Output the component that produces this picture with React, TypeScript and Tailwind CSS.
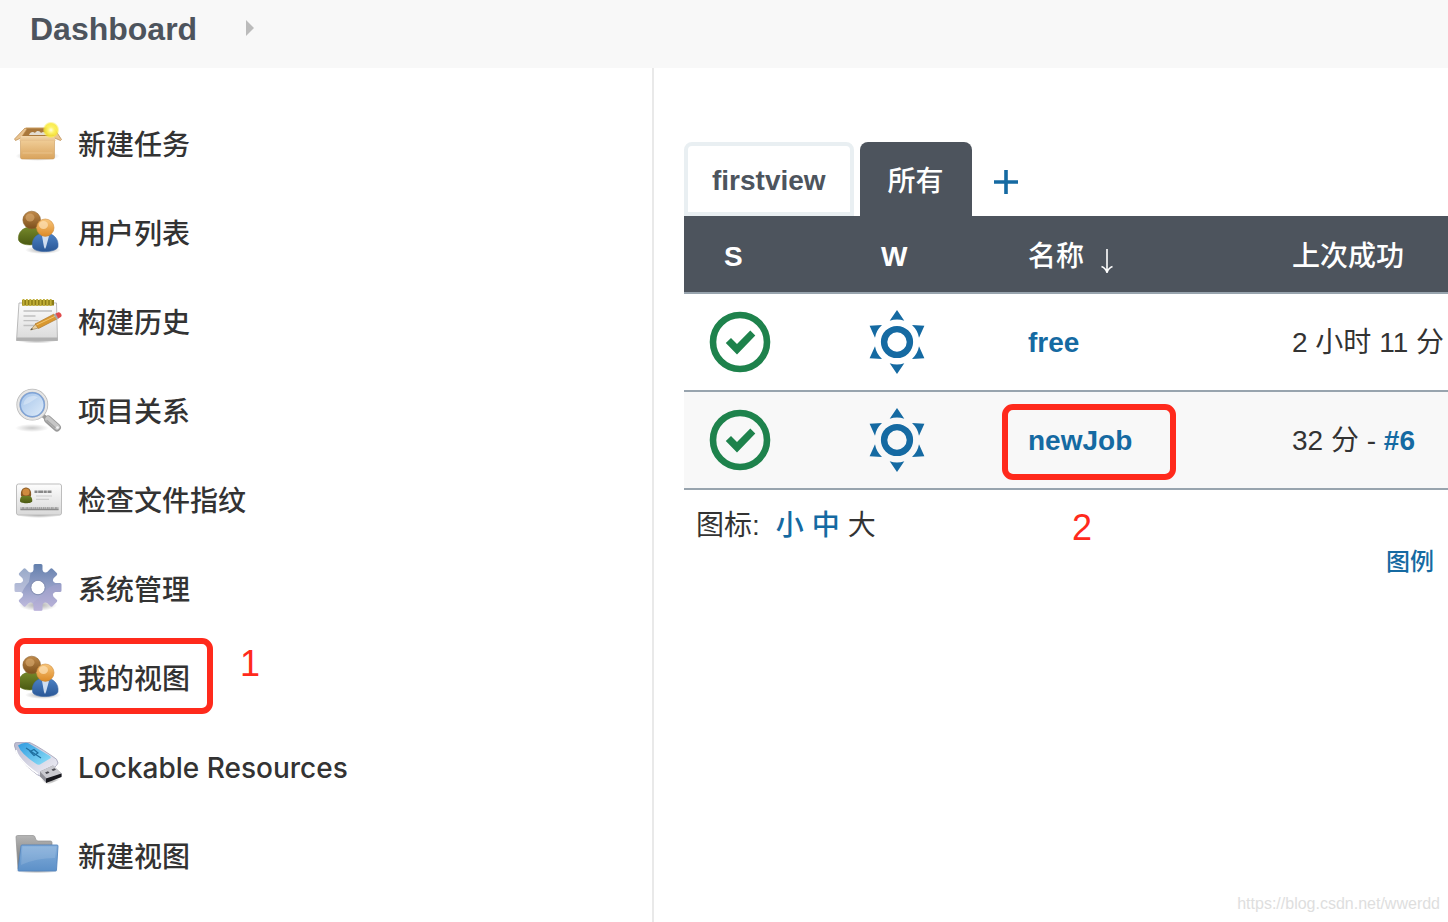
import React from "react";

const ICON = "block size-12 shrink-0";

function SharedGradients() {
  const grads: [string, string, string, string, string][] = [
    ["box-front", "#f0cd97", "#d9a35c", "0", "1"],
    ["box-rim", "#f3d9b0", "#e6bf88", "0", "1"],
    ["head-brown", "#c08a4a", "#7c4f1c", "0", "1"],
    ["body-green", "#75882a", "#4b5a12", "0", "1"],
    ["head-orange", "#f8c67c", "#dc8a26", "0", "1"],
    ["body-blue", "#4d83c6", "#2a5796", "0", "1"],
    ["paper", "#fdfdfd", "#d9d9d9", "0", "1"],
    ["lens", "#9fc0e8", "#e3effb", "1", "1"],
    ["gear", "#6380ad", "#c9c0e2", "0", "1"],
    ["usb-body", "#b9b9cf", "#f1f1f8", "1", "1"],
    ["usb-label", "#2f9be0", "#8fe0f8", "1", "1"],
    ["folder-back", "#b5b5b5", "#6f6f6f", "0", "1"],
    ["folder-front", "#85afdb", "#5c90c8", "0", "1"],
  ];
  return (
    <svg className="absolute size-0" aria-hidden="true">
      <defs>
        {grads.map(([id, from, to, x2, y2]) => (
          <linearGradient key={id} id={id} x1="0" y1="0" x2={x2} y2={y2}>
            <stop offset="0" stopColor={from} />
            <stop offset="1" stopColor={to} />
          </linearGradient>
        ))}
        <radialGradient id="glow">
          <stop offset="0" stopColor="#fffde0" />
          <stop offset="0.35" stopColor="#fdf36a" />
          <stop offset="0.75" stopColor="#f8e832" stopOpacity="0.85" />
          <stop offset="1" stopColor="#f8ec4a" stopOpacity="0" />
        </radialGradient>
        <radialGradient id="shade">
          <stop offset="0" stopColor="#000" stopOpacity="0.35" />
          <stop offset="1" stopColor="#000" stopOpacity="0" />
        </radialGradient>
      </defs>
    </svg>
  );
}

function BoxIcon() {
  return (
    <svg className={ICON} viewBox="0 0 48 48" aria-hidden="true">
      <ellipse cx="23.5" cy="37" rx="22" ry="5" fill="url(#shade)" />
      <path d="M12 9h27l2 9H7z" fill="#a9783c" stroke="#c99a5c" />
      <path d="M15 16c1-3 4-4 6-2 2-3 5-2 6 0 2-2 5-1 6 2z" fill="#e3ddd2" />
      <path d="M11 9 0.500 20l1 1.500L7 19l6-9zM40 9l7.500 11.500-1 1L40.500 19 37 10z" fill="#e9c491" stroke="#b98849" strokeWidth="0.700" />
      <path d="M6.500 21h34v17.500q0 1.500-2 1.500h-30q-2 0-2-1.500z" fill="url(#box-front)" stroke="#c99a5c" strokeWidth="0.600" />
      <path d="M7 17h33.500l1 5H5.500z" fill="url(#box-rim)" />
      <path d="M8.500 34h30" stroke="#f3d5a5" strokeOpacity="0.500" />
      <circle cx="37" cy="11" r="8.500" fill="url(#glow)" />
    </svg>
  );
}

function PeopleIcon() {
  return (
    <svg className={ICON} viewBox="0 0 48 48" aria-hidden="true">
      <ellipse cx="29" cy="42" rx="18" ry="4" fill="url(#shade)" />
      <path d="M4.500 32c-1-7 4-13 12.500-13s11 6 10 13c-1 6-20 7-22.500 0z" fill="url(#body-green)" stroke="#5f701c" strokeWidth="0.600" />
      <circle cx="17.700" cy="12" r="8.800" fill="url(#head-brown)" stroke="#8a5f2c" strokeWidth="0.600" />
      <ellipse cx="16" cy="9.500" rx="4.500" ry="4" fill="#dcae72" fillOpacity="0.600" />
      <path d="M18.500 38.500c-1-8 4-13.500 12.500-13.500s14 6 13 13.500c-.5 6.500-25 7-25.500 0z" fill="url(#body-blue)" stroke="#3c69a8" strokeWidth="0.600" />
      <path d="M28 28h7l-3 11-1 2-1-2z" fill="#e9f1fb" fillOpacity="0.850" />
      <circle cx="31.300" cy="19.700" r="8.700" fill="url(#head-orange)" stroke="#cf8a35" strokeWidth="0.600" />
      <ellipse cx="29.500" cy="17" rx="4.500" ry="4" fill="#fde3b8" fillOpacity="0.700" />
    </svg>
  );
}

function NotepadIcon() {
  return (
    <svg className={ICON} viewBox="0 0 48 48" aria-hidden="true">
      <ellipse cx="23" cy="43.500" rx="20" ry="3" fill="url(#shade)" />
      <path d="M5 6h37.500l1 37.500H2.500z" fill="url(#paper)" stroke="#b3b3b3" strokeWidth="0.900" />
      <path d="M3 40.500h40.500v3h-41z" fill="#b0b0b0" />
      <path d="M8 3h32v5.500H8z" fill="#8c7c16" />
      <path d="M9.500 2v7m3.400-7v7m3.400-7v7m3.400-7v7m3.400-7v7m3.400-7v7m3.400-7v7m3.400-7v7m3.400-7v7" stroke="#c0ae36" strokeWidth="1.900" />
      <path d="M9.500 14h28.500M9.500 19h12M9.500 23.700h15M9.500 28.500h13" stroke="#c0c0c0" strokeWidth="1.300" />
      <path d="m16.500 33 5.500-6.500 2.500 4.500z" fill="#e8cfa0" stroke="#8a6a30" strokeWidth="0.500" />
      <path d="m21 27 19-10 3 5-18.500 9.500z" fill="#d9982f" stroke="#a87228" strokeWidth="0.600" />
      <path d="m22.500 28 19-9" stroke="#f2c671" />
      <path d="m39.500 17.500 2.300-1 3 5-2.300 1z" fill="#a9a9a9" />
      <path d="m41.500 16.500 3-1.200q1.500-.3 2.700 1.600 1 2.200-.3 3l-2.700 1.600z" fill="#e04b4b" />
      <path d="m16.500 33 1.500-2 .8 1.200z" fill="#333" />
    </svg>
  );
}

function MagnifierIcon() {
  return (
    <svg className={ICON} viewBox="0 0 48 48" aria-hidden="true">
      <ellipse cx="18" cy="42" rx="17" ry="4" fill="url(#shade)" fillOpacity="0.600" />
      <path d="m29 29.500 4.500 4" stroke="#9a9a9a" strokeWidth="4" />
      <path d="m34 33.500 9 8" stroke="#9a9a9a" strokeWidth="7.800" strokeLinecap="round" />
      <path d="m34 33 9 8" stroke="#c6c6c6" strokeWidth="5.500" strokeLinecap="round" />
      <path d="m33 34.500 8 7" stroke="#a4a4a4" strokeWidth="1.500" strokeLinecap="round" />
      <circle cx="43.500" cy="41.500" r="1.300" fill="#f2f2f2" />
      <circle cx="18.300" cy="18.700" r="14" fill="url(#lens)" stroke="#b9b9b9" strokeWidth="3.800" />
      <circle cx="18.300" cy="18.700" r="14" fill="none" stroke="#e6e6e6" strokeWidth="2.200" />
      <circle cx="18.300" cy="18.700" r="12" fill="none" stroke="#7fa3d6" strokeWidth="1.500" />
      <path d="M9.500 19c0-5 4-9 9.500-9 2 0 4 .6 5 1.500-4 1-7 6-14.500 7.500z" fill="#fff" fillOpacity="0.300" />
    </svg>
  );
}

function CardIcon() {
  return (
    <svg className={ICON} viewBox="0 0 48 48" aria-hidden="true">
      <ellipse cx="25" cy="40" rx="22" ry="3" fill="url(#shade)" />
      <rect x="2.500" y="9" width="45" height="31" rx="2" fill="url(#paper)" stroke="#bdbdbd" />
      <path d="M6 26c0-4 2-6.500 6-6.500s6.300 2.500 6.300 6.500c0 3-12.300 3-12.300 0z" fill="url(#body-green)" />
      <path d="M7 21c-.8-5 1.500-8.500 5-8.500s5.800 3.500 5 8.500z" fill="#8a5a24" />
      <circle cx="12" cy="17" r="3.600" fill="#cf8b3f" />
      <path d="M20.500 16.700h17" stroke="#888" strokeWidth="2.400" strokeDasharray="3 0.700 5 0.600" />
      <path d="M22 21h16M22 24.300h13" stroke="#cccccc" strokeWidth="1.200" />
      <path d="M6.500 33.500h38" stroke="#a5a5a5" strokeWidth="3" strokeDasharray="1 0.600 2 0.500" />
      <path d="M6.500 34.500h38" stroke="#8a8a8a" strokeWidth="1.400" />
    </svg>
  );
}

function GearIcon() {
  const teeth = [0, 45, 90, 135, 180, 225, 270, 315];
  return (
    <svg className={ICON} viewBox="0 0 48 48" aria-hidden="true">
      <defs>
        <mask id="gear-cut">
          <g fill="#fff">
            {teeth.map((a) => (
              <path key={a} d="M16.500 12 19.500 6V1.500Q19.500 0 21 0h6Q28.500 0 28.500 1.500V6l3 6z" transform={`rotate(${a} 24 23.500)`} />
            ))}
            <circle cx="24" cy="23.500" r="16.500" />
          </g>
          <circle cx="24" cy="23.500" r="6.800" fill="#000" />
        </mask>
      </defs>
      <ellipse cx="24" cy="41" rx="19" ry="6" fill="url(#shade)" />
      <circle cx="24" cy="23.500" r="7" fill="#fff" />
      <g mask="url(#gear-cut)">
        <rect width="48" height="48" fill="url(#gear)" />
        <path d="M0 0h18L15 18Q9 24 6 34H0z" fill="#fff" fillOpacity="0.300" />
        <path d="M48 20Q34 20 28 32q-8 4-14 14h34z" fill="#a9a3cf" fillOpacity="0.400" />
      </g>
      <circle cx="24" cy="23.500" r="7.300" fill="none" stroke="#8791b3" />
    </svg>
  );
}

function UsbIcon() {
  return (
    <svg className={ICON} viewBox="0 0 48 48" aria-hidden="true">
      <path d="M27 37.500 33 43l14-6-1-3z" fill="url(#shade)" />
      <path d="M.5 4Q0 0 4 0h10q5 1 24 14 6 3 6 7-1 4-15 12.500-3 1.500-6-1Q3 18 .5 4z" fill="url(#usb-body)" stroke="#9f9fb6" strokeWidth="0.800" />
      <path d="M2 8q2 10 22 24" fill="none" stroke="#fff" strokeWidth="1.500" />
      <path d="M4 3.500Q9 0 14 1l22 13q1.500 1.500 0 2.500L26 22.500q-2 .8-4-.8Q7 12 4 3.500z" fill="url(#usb-label)" />
      <path d="m12 6 15 10M16 9.500l4-2 4 3.500-4 2.500z" fill="none" stroke="#1f6f9f" strokeWidth="1.200" />
      <path d="m26 29.500 13-6 8.500 8v3L32 40.500l-6-6z" fill="#8e8e96" />
      <path d="m26 29.500 13-6 8.500 8-14 6z" fill="#c9c9cf" />
      <path d="m31 30.500 3-1.300 1.500 1.500-3 1.300zM37.500 27.500l3-1.300 1.500 1.500-3 1.300z" fill="#4b4b52" />
      <path d="m32 36.500 15.500-5v3.500L32 41z" fill="#17171c" />
    </svg>
  );
}

function FolderIcon() {
  return (
    <svg className={ICON} viewBox="0 0 48 48" aria-hidden="true">
      <ellipse cx="23" cy="40" rx="22" ry="2.500" fill="url(#shade)" />
      <path d="M2 6q0-1.500 1.500-1.500H19q2 0 2.300 2.500.4 3 2.700 3h12.500q1.500 0 1.500 1.500V38H4z" fill="url(#folder-back)" stroke="#909090" strokeWidth="0.700" />
      <path d="M8 14h35q1.200 0 1 1.200L42.500 39q0 1-1 1H5q-1.200 0-1-1L7 15q0-1 1-1z" fill="url(#folder-front)" stroke="#5485bd" strokeWidth="0.900" />
      <path d="M8.500 15.500h34L41 27Q22 27 7 34z" fill="#fff" fillOpacity="0.120" />
    </svg>
  );
}

function SuccessIcon() {
  return (
    <svg className="block size-16" viewBox="-32 -32 64 64" role="img" aria-label="成功">
      <circle r="27" fill="none" stroke="#1e824c" strokeWidth="6.600" />
      <path d="m-14.200 1 5.200-5 6 6L10.300-11.500l5 5L-3 12.400z" fill="#1e824c" />
    </svg>
  );
}

function SunnyIcon() {
  const side = "M-27.400-16.300-15-17A22.500 22.500 0 0 0-22-4.300z";
  const cap = "M0-32 7.300-21.300A22.500 22.500 0 0 0-7.300-21.300z";
  return (
    <svg className="block size-16" viewBox="-32 -32 64 64" role="img" aria-label="晴">
      <g fill="#156aa2">
        <path d={cap} />
        <path d={cap} transform="scale(1 -1)" />
        <path d={side} />
        <path d={side} transform="scale(-1 1)" />
        <path d={side} transform="scale(1 -1)" />
        <path d={side} transform="scale(-1 -1)" />
      </g>
      <circle r="12.900" fill="none" stroke="#156aa2" strokeWidth="6.400" />
    </svg>
  );
}

const tasks = [
  { label: "新建任务", Icon: BoxIcon },
  { label: "用户列表", Icon: PeopleIcon },
  { label: "构建历史", Icon: NotepadIcon },
  { label: "项目关系", Icon: MagnifierIcon },
  { label: "检查文件指纹", Icon: CardIcon },
  { label: "系统管理", Icon: GearIcon },
  { label: "我的视图", Icon: PeopleIcon, mark: true },
  { label: "Lockable Resources", Icon: UsbIcon },
  { label: "新建视图", Icon: FolderIcon },
];

const jobs = [
  { name: "free", last: "2 小时 11 分", build: "" },
  { name: "newJob", last: "32 分 - ", build: "#6", mark: true },
];

function Highlight({ className }: { className: string }) {
  return <span className={`pointer-events-none absolute rounded-[11px] border-6 border-[#ff2a1c] ${className}`} />;
}

export default function App() {
  return (
    <div className="relative flex min-h-screen flex-col overflow-hidden bg-white font-['Liberation_Sans','Noto_Sans_CJK_SC',sans-serif] text-[28px] leading-10 text-[#333]">
      <SharedGradients />
      <header className="flex h-[68px] shrink-0 items-center gap-[49px] bg-[#f8f8f8] pb-2.5 pl-[30px]">
        <a href="#" className="text-[32px] font-bold text-[#4d545d]">Dashboard</a>
        <svg className="mb-0.5 h-4 w-2" viewBox="0 0 8 16" aria-hidden="true">
          <path d="M0 0 8 8 0 16z" fill="#bbb" />
        </svg>
      </header>

      <div className="flex flex-1">
        <nav className="w-[654px] shrink-0 border-r-2 border-[#e9e9e9] pt-[30px] pl-3.5">
          <ul>
            {tasks.map(({ label, Icon, mark }) => (
              <li key={label} className="relative flex h-[89px] items-center">
                <a href="#" className="flex items-center gap-4 font-['Inter','Noto_Sans_CJK_SC',sans-serif] font-medium">
                  <Icon />
                  <span className="pt-1">{label}</span>
                </a>
                {mark && (
                  <>
                    <Highlight className="top-1.5 left-0 h-[76px] w-[199px]" />
                    <span className="absolute top-3 left-[226px] text-[36px] text-[#ff2a1c]">1</span>
                  </>
                )}
              </li>
            ))}
          </ul>
        </nav>

        <main className="min-w-0 flex-1 pt-[74px] pl-[30px]">
          <div className="flex h-[74px] gap-1.5">
            <a href="#" className="flex items-center rounded-t-lg border-4 border-[#e9eff2] px-6 pt-1 font-bold text-[#4d545d]">firstview</a>
            <a href="#" className="flex items-center rounded-t-lg bg-[#4d545d] px-7 pt-1.5 font-medium text-white">所有</a>
            <a href="#" aria-label="新建视图" className="flex items-center pt-1.5 pl-4">
              <svg className="size-6" viewBox="0 0 24 24" aria-hidden="true">
                <path d="M12 0v24M0 12h24" stroke="#156aa2" strokeWidth="3.600" />
              </svg>
            </a>
          </div>

          <table className="w-full table-fixed border-collapse text-left whitespace-nowrap">
            <thead>
              <tr className="h-[77px] border-b-2 border-[#98a4ae] bg-[#4d545d] text-white">
                <th className="w-[157px] pt-1.5 pl-10">S</th>
                <th className="w-[163px] pt-1.5 pl-10">W</th>
                <th className="w-[264px] pt-1.5 pl-6 font-medium">
                  <span className="flex items-center gap-4">
                    名称
                    <svg className="mt-2 h-6 w-3.5" viewBox="0 0 14 24" fill="none" stroke="#fff" strokeWidth="1.600" aria-hidden="true">
                      <path d="M7 0v23M1.500 17.500Q5.500 19 7 23.500 8.500 19 12.500 17.500" />
                    </svg>
                  </span>
                </th>
                <th className="pt-1.5 pl-6 font-medium">上次成功</th>
              </tr>
            </thead>
            <tbody>
              {jobs.map((job) => (
                <tr key={job.name} className="h-[98px] border-b-2 border-[#98a4ae] even:bg-[#f8f8f8]">
                  <td className="pl-6"><SuccessIcon /></td>
                  <td className="pl-6"><SunnyIcon /></td>
                  <td className="relative pt-0.5 pl-6">
                    <a href="#" className="font-bold text-[#156aa2]">{job.name}</a>
                    {job.mark && <Highlight className="top-3 -left-0.5 h-[76px] w-[174px]" />}
                  </td>
                  <td className="pt-0.5 pl-6">
                    {job.last}
                    {job.build && <a href="#" className="font-bold text-[#156aa2]">{job.build}</a>}
                  </td>
                </tr>
              ))}
            </tbody>
          </table>

          <div className="relative flex items-center gap-2 pt-4 pl-3">
            <span className="pr-2">图标:</span>
            <a href="#" className="font-medium text-[#156aa2]">小</a>
            <a href="#" className="font-medium text-[#156aa2]">中</a>
            <span>大</span>
            <span className="absolute top-[18px] left-[388px] text-[36px] text-[#ff2a1c]">2</span>
          </div>
          <div className="flex justify-end pr-3.5 text-2xl">
            <a href="#" className="font-medium text-[#156aa2]">图例</a>
          </div>
        </main>
      </div>

      <span className="absolute right-2 bottom-1.5 text-base leading-6 text-[#dedede]">https://blog.csdn.net/wwerdd</span>
    </div>
  );
}
